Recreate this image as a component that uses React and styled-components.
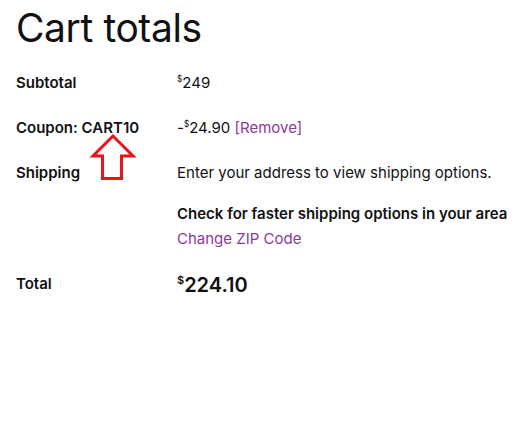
import React from 'react'
import styled, { createGlobalStyle } from 'styled-components'

const GlobalStyle = createGlobalStyle`
  body {
    margin: 0;
    background: #fff;
    font-family: Inter, "Noto Sans", sans-serif;
    color: #111;
  }
`

const Wrapper = styled.div`
  position: relative;
  padding: 0 16px;
`

const Title = styled.h2`
  margin: 0;
  padding-top: 4px;
  font-size: 39px;
  font-weight: 400;
  line-height: 48px;
  letter-spacing: -0.4px;
`

const Table = styled.table`
  border-collapse: collapse;
  margin-top: 20px;
  font-size: 15px;
  width: max-content;
`

const Row = styled.tr``

const Label = styled.th`
  width: 161px;
  min-width: 161px;
  padding: 0 0 24px;
  text-align: left;
  vertical-align: top;
  font-weight: 600;
  line-height: 21px;
  white-space: nowrap;
`

const Value = styled.td`
  padding: ${(p) => (p.$big ? '2px 0 24px' : '0 0 24px')};
  vertical-align: top;
  line-height: 21px;
  white-space: nowrap;
  font-weight: ${(p) => (p.$big ? 600 : 400)};
  font-size: ${(p) => (p.$big ? '20px' : '15px')};
`

const Sym = styled.sup`
  font-size: 0.55em;
  vertical-align: 0.7em;
  line-height: 0;
`

const Link = styled.a`
  color: #8b3a98;
  text-decoration: none;
`

const Faster = styled.div`
  margin-top: 20px;
  font-weight: 600;
`

const ZipLink = styled(Link)`
  display: block;
  margin-top: 4px;
`

const Arrow = styled.svg`
  position: absolute;
  left: 0;
  top: 0;
  pointer-events: none;
`

const App = () => {
  return (
    <Wrapper>
      <GlobalStyle />
      <Title>Cart totals</Title>
      <Table>
        <tbody>
          <Row>
            <Label>Subtotal</Label>
            <Value>
              <Sym>$</Sym>249
            </Value>
          </Row>
          <Row>
            <Label>Coupon: CART10</Label>
            <Value>
              -<Sym>$</Sym>24.90 <Link href="#">[Remove]</Link>
            </Value>
          </Row>
          <Row>
            <Label>Shipping</Label>
            <Value>
              Enter your address to view shipping options.
              <Faster>Check for faster shipping options in your area</Faster>
              <ZipLink href="#">Change ZIP Code</ZipLink>
            </Value>
          </Row>
          <Row>
            <Label>Total</Label>
            <Value $big>
              <Sym>$</Sym>224.10
            </Value>
          </Row>
        </tbody>
      </Table>
      <Arrow width="520" height="436" viewBox="0 0 520 436">
        <polygon
          points="113,136 93,156 102.5,156 102.5,178.5 121.5,178.5 121.5,156 133,156"
          fill="none"
          stroke="#e8141c"
          strokeWidth="3"
          strokeLinejoin="miter"
        />
      </Arrow>
    </Wrapper>
  )
}

export default App
